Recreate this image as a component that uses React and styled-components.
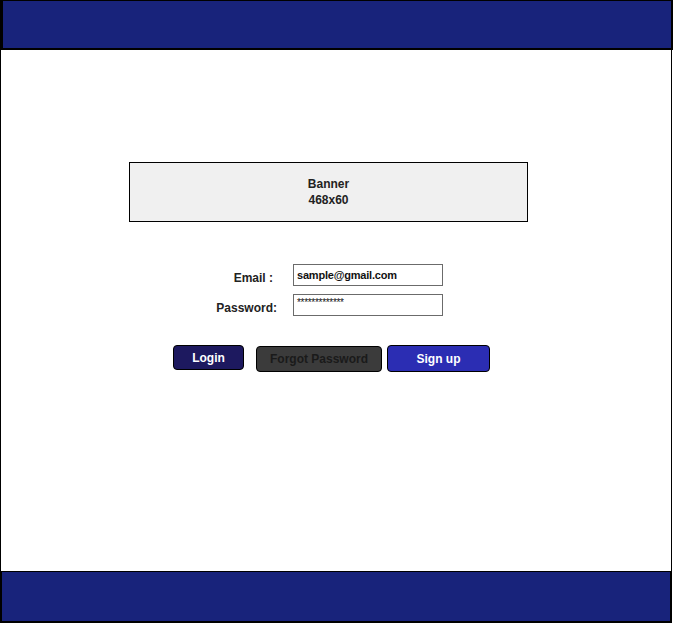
import React from 'react'
import styled, { createGlobalStyle } from 'styled-components'

const GlobalStyle = createGlobalStyle`
  body {
    margin: 0;
    background: #fff;
    font-family: 'Liberation Sans', Arial, sans-serif;
  }
  * { box-sizing: border-box; }
`

const Page = styled.div`
  width: 672px;
  height: 623px;
  display: flex;
  flex-direction: column;
`

const Header = styled.div`
  height: 50px;
  width: 673px;
  background: #18237b;
  border: 2px solid #000;
  border-top-width: 1px;
  border-left-width: 3px;
`

const Main = styled.div`
  height: 521px;
  border-left: 1px solid #000;
  border-right: 1px solid #000;
  padding: 112px 0 0 128px;
`

const Footer = styled.div`
  height: 52px;
  background: #18237b;
  border: 2px solid #000;
  border-top-width: 1px;
`

const Stage = styled.div`
  width: 399px;
  display: flex;
  flex-direction: column;
  align-items: flex-start;
`

const Banner = styled.div`
  width: 399px;
  height: 60px;
  background: #f0f0f0;
  border: 1px solid #000;
  display: flex;
  flex-direction: column;
  align-items: center;
  justify-content: center;
  font-size: 12px;
  font-weight: bold;
  line-height: 16px;
  color: #222;
`

const Form = styled.div`
  margin: 42px 0 0 71px;
  display: grid;
  grid-template-columns: 77px 150px;
  column-gap: 16px;
  row-gap: 8px;
  align-items: center;
`

const Label = styled.label`
  text-align: right;
  font-size: 12px;
  font-weight: bold;
  color: #222;
  padding-top: 5px;
  padding-right: ${p => p.$trail || 0}px;
`

const Field = styled.div`
  height: 22px;
  border: 1px solid #6b6b6b;
  background: #fff;
  padding: 2px 0 0 3px;
  font-size: ${p => (p.$secret ? '10px' : '11px')};
  font-weight: ${p => (p.$secret ? 'normal' : 'bold')};
  letter-spacing: ${p => (p.$secret ? '-0.3px' : '-0.2px')};
  line-height: ${p => (p.$secret ? '12px' : '16px')};
  color: #111;
`

const Actions = styled.div`
  margin: 29px 0 0 44px;
  display: flex;
  align-items: flex-start;
`

const Button = styled.button`
  width: ${p => p.$w}px;
  height: ${p => p.$h}px;
  margin: ${p => p.$top || 0}px ${p => p.$right || 0}px 0 0;
  padding: 0;
  border: 1px solid #000;
  border-radius: 4px;
  background: ${p => p.$bg};
  color: ${p => p.$fg};
  font-family: 'Liberation Sans', Arial, sans-serif;
  font-size: 12px;
  font-weight: bold;
  cursor: pointer;
`

export default function App() {
  return (
    <>
      <GlobalStyle />
      <Page>
        <Header />
        <Main>
          <Stage>
            <Banner>
              <span>Banner</span>
              <span>468x60</span>
            </Banner>
            <Form>
              <Label $trail={4}>Email :</Label>
              <Field>sample@gmail.com</Field>
              <Label>Password:</Label>
              <Field $secret>*************</Field>
            </Form>
            <Actions>
              <Button $w={71} $h={25} $right={12} $bg="#1d195f" $fg="#fff">Login</Button>
              <Button $w={126} $h={26} $top={1} $right={5} $bg="#3b3b3b" $fg="#1a1a1a">Forgot Password</Button>
              <Button $w={103} $h={27} $bg="#2b2db3" $fg="#fff">Sign up</Button>
            </Actions>
          </Stage>
        </Main>
        <Footer />
      </Page>
    </>
  )
}
